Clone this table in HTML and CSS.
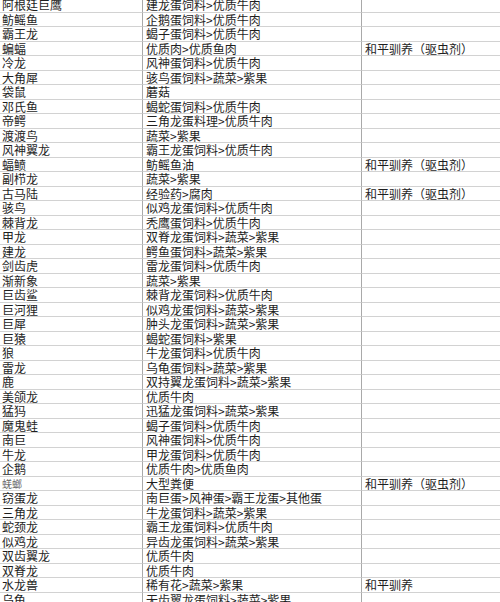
FILE: index.html
```html
<!DOCTYPE html>
<html lang="zh">
<head>
<meta charset="utf-8">
<link rel="stylesheet" href="styles.css">
</head>
<body>
<div class="sheet">
<div class="c a">阿根廷巨鹰</div><div class="c b">建龙蛋饲料&gt;优质牛肉</div><div class="c d"></div>
<div class="c a">鲂鳐鱼</div><div class="c b">企鹅蛋饲料&gt;优质牛肉</div><div class="c d"></div>
<div class="c a">霸王龙</div><div class="c b">蝎子蛋饲料&gt;优质牛肉</div><div class="c d"></div>
<div class="c a">蝙蝠</div><div class="c b">优质肉&gt;优质鱼肉</div><div class="c d">和平驯养（驱虫剂）</div>
<div class="c a">冷龙</div><div class="c b">风神蛋饲料&gt;优质牛肉</div><div class="c d"></div>
<div class="c a">大角犀</div><div class="c b">骇鸟蛋饲料&gt;蔬菜&gt;紫果</div><div class="c d"></div>
<div class="c a">袋鼠</div><div class="c b">蘑菇</div><div class="c d"></div>
<div class="c a">邓氏鱼</div><div class="c b">蝎蛇蛋饲料&gt;优质牛肉</div><div class="c d"></div>
<div class="c a">帝鳄</div><div class="c b">三角龙蛋料理&gt;优质牛肉</div><div class="c d"></div>
<div class="c a">渡渡鸟</div><div class="c b">蔬菜&gt;紫果</div><div class="c d"></div>
<div class="c a">风神翼龙</div><div class="c b">霸王龙蛋饲料&gt;优质牛肉</div><div class="c d"></div>
<div class="c a">蝠鲼</div><div class="c b">鲂鳐鱼油</div><div class="c d">和平驯养（驱虫剂）</div>
<div class="c a">副栉龙</div><div class="c b">蔬菜&gt;紫果</div><div class="c d"></div>
<div class="c a">古马陆</div><div class="c b">经验药&gt;腐肉</div><div class="c d">和平驯养（驱虫剂）</div>
<div class="c a">骇鸟</div><div class="c b">似鸡龙蛋饲料&gt;优质牛肉</div><div class="c d"></div>
<div class="c a">棘背龙</div><div class="c b">秃鹰蛋饲料&gt;优质牛肉</div><div class="c d"></div>
<div class="c a">甲龙</div><div class="c b">双脊龙蛋饲料&gt;蔬菜&gt;紫果</div><div class="c d"></div>
<div class="c a">建龙</div><div class="c b">鳄鱼蛋饲料&gt;蔬菜&gt;紫果</div><div class="c d"></div>
<div class="c a">剑齿虎</div><div class="c b">雷龙蛋饲料&gt;优质牛肉</div><div class="c d"></div>
<div class="c a">渐新象</div><div class="c b">蔬菜&gt;紫果</div><div class="c d"></div>
<div class="c a">巨齿鲨</div><div class="c b">棘背龙蛋饲料&gt;优质牛肉</div><div class="c d"></div>
<div class="c a">巨河狸</div><div class="c b">似鸡龙蛋饲料&gt;蔬菜&gt;紫果</div><div class="c d"></div>
<div class="c a">巨犀</div><div class="c b">肿头龙蛋饲料&gt;蔬菜&gt;紫果</div><div class="c d"></div>
<div class="c a">巨猿</div><div class="c b">蝎蛇蛋饲料&gt;紫果</div><div class="c d"></div>
<div class="c a">狼</div><div class="c b">牛龙蛋饲料&gt;优质牛肉</div><div class="c d"></div>
<div class="c a">雷龙</div><div class="c b">乌龟蛋饲料&gt;蔬菜&gt;紫果</div><div class="c d"></div>
<div class="c a">鹿</div><div class="c b">双持翼龙蛋饲料&gt;蔬菜&gt;紫果</div><div class="c d"></div>
<div class="c a">美颌龙</div><div class="c b">优质牛肉</div><div class="c d"></div>
<div class="c a">猛犸</div><div class="c b">迅猛龙蛋饲料&gt;蔬菜&gt;紫果</div><div class="c d"></div>
<div class="c a">魔鬼蛙</div><div class="c b">蝎子蛋饲料&gt;优质牛肉</div><div class="c d"></div>
<div class="c a">南巨</div><div class="c b">风神蛋饲料&gt;优质牛肉</div><div class="c d"></div>
<div class="c a">牛龙</div><div class="c b">甲龙蛋饲料&gt;优质牛肉</div><div class="c d"></div>
<div class="c a">企鹅</div><div class="c b">优质牛肉&gt;优质鱼肉</div><div class="c d"></div>
<div class="c a faint">蜣螂</div><div class="c b">大型粪便</div><div class="c d">和平驯养（驱虫剂）</div>
<div class="c a">窃蛋龙</div><div class="c b">南巨蛋&gt;风神蛋&gt;霸王龙蛋&gt;其他蛋</div><div class="c d"></div>
<div class="c a">三角龙</div><div class="c b">牛龙蛋饲料&gt;蔬菜&gt;紫果</div><div class="c d"></div>
<div class="c a">蛇颈龙</div><div class="c b">霸王龙蛋饲料&gt;优质牛肉</div><div class="c d"></div>
<div class="c a">似鸡龙</div><div class="c b">异齿龙蛋饲料&gt;蔬菜&gt;紫果</div><div class="c d"></div>
<div class="c a">双齿翼龙</div><div class="c b">优质牛肉</div><div class="c d"></div>
<div class="c a">双脊龙</div><div class="c b">优质牛肉</div><div class="c d"></div>
<div class="c a">水龙兽</div><div class="c b">稀有花&gt;蔬菜&gt;紫果</div><div class="c d">和平驯养</div>
<div class="c a">乌龟</div><div class="c b">无齿翼龙蛋饲料&gt;蔬菜&gt;紫果</div><div class="c d"></div>
</div>
</body>
</html>
```
FILE: styles.css
```css
html, body {
  margin: 0;
  padding: 0;
  background: #ffffff;
  overflow: hidden;
}
body {
  width: 500px;
  height: 602px;
}
.sheet {
  display: grid;
  grid-template-columns: 143px 219px 138px;
  grid-auto-rows: 14.5px;
  margin-top: -1.8px;
  font-family: "Noto Sans CJK SC", "Noto Sans", sans-serif;
  font-size: 12px;
  color: #1e1e1e;
}
.c {
  box-sizing: border-box;
  border-bottom: 1px solid #d2d2d2;
  line-height: 13.5px;
  white-space: nowrap;
  overflow: hidden;
}
.a {
  padding-left: 2px;
  border-right: 1px solid #a9a9a9;
}
.b {
  padding-left: 3px;
  border-right: 1px solid #a9a9a9;
}
.d {
  padding-left: 3px;
}
.faint {
  font-size: 10px;
  color: #6a6a6a;
}
```
